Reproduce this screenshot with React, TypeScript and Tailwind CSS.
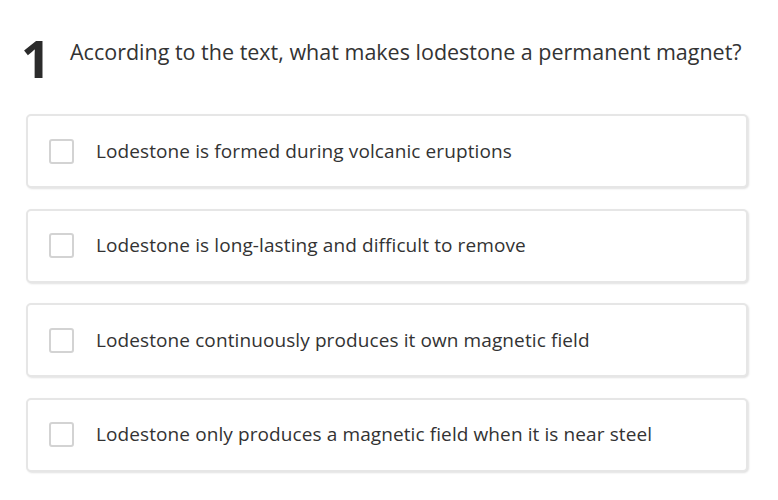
import React from "react";

const options = [
  "Lodestone is formed during volcanic eruptions",
  "Lodestone is long-lasting and difficult to remove",
  "Lodestone continuously produces it own magnetic field",
  "Lodestone only produces a magnetic field when it is near steel",
];

export default function App() {
  return (
    <div
      className="w-[778px] h-[500px] bg-white text-[#333333] overflow-hidden"
      style={{ fontFamily: '"Open Sans", "Noto Sans", sans-serif' }}
    >
      <div className="flex items-start pl-[21px] pt-[30px]">
        <div className="text-[52px] font-bold leading-none text-[#2b2b2b] w-[49px] mt-[2px]">1</div>
        <div className="text-[21.5px] leading-[28px] mt-[8px]">
          According to the text, what makes lodestone a permanent magnet?
        </div>
      </div>
      <div className="flex flex-col gap-[20.5px] pl-[26px] pr-[30px] mt-[30px]">
        {options.map((o) => (
          <div
            key={o}
            className="h-[74px] flex items-center rounded-[5px] border-2 border-[#e6e6e6] bg-white shadow-[1px_1px_2px_rgba(0,0,0,0.12)]"
          >
            <div className="w-[25px] h-[25px] ml-[21px] rounded-[3px] border-2 border-[#d3d3d3] bg-white" />
            <div className="ml-[22px] text-[19px] tracking-[0.1px] text-[#333333]">{o}</div>
          </div>
        ))}
      </div>
    </div>
  );
}
